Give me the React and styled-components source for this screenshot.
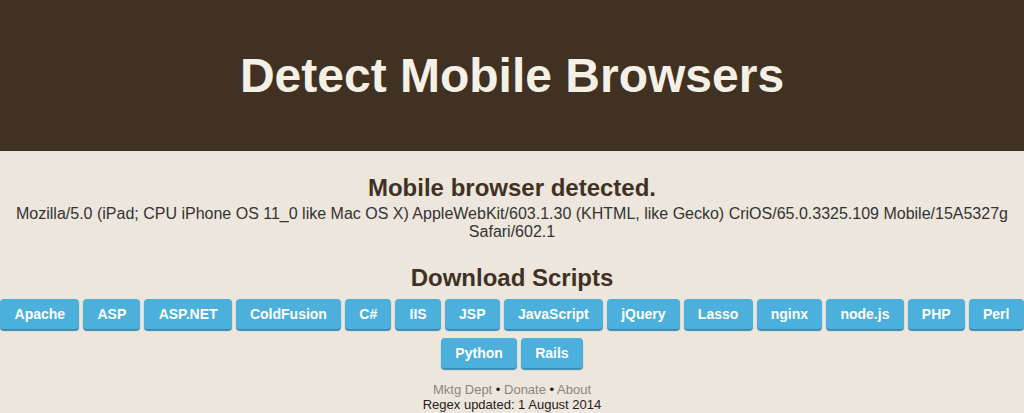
import React from "react";
import styled, { createGlobalStyle } from "styled-components";

const scripts = [
  "Apache", "ASP", "ASP.NET", "ColdFusion", "C#", "IIS", "JSP", "JavaScript",
  "jQuery", "Lasso", "nginx", "node.js", "PHP", "Perl", "Python", "Rails",
];

const GlobalStyle = createGlobalStyle`
  html, body {
    margin: 0;
    padding: 0;
    background: #ede6dc;
    font-family: "Liberation Sans", Arial, sans-serif;
  }
`;

const Header = styled.header`
  height: 151px;
  background: #413123;
  display: flex;
  align-items: center;
  justify-content: center;
`;

const Title = styled.h1`
  margin: 0;
  font-size: 48px;
  font-weight: 700;
  color: #f5f0e6;
`;

const Main = styled.main`
  text-align: center;
  padding-top: 23px;
`;

const Heading = styled.h2`
  margin: ${(p) => p.$top || 0}px 0 0;
  font-size: 24px;
  line-height: 28px;
  font-weight: 700;
  color: #413123;
`;

const Agent = styled.p`
  margin: 3px 0 0;
  font-size: 16px;
  line-height: 18px;
  color: #333;
`;

const ButtonRow = styled.div`
  display: flex;
  flex-wrap: wrap;
  justify-content: center;
  column-gap: 4px;
  row-gap: 9px;
  margin-top: 7px;
`;

const ScriptButton = styled.a`
  display: block;
  height: 30px;
  line-height: 30px;
  padding: 0 14.2px;
  border-radius: 4px;
  background: #4bb0dc;
  box-shadow: 0 2px 1px #3a8ab0;
  color: #fff;
  font-size: 14px;
  font-weight: 700;
  text-decoration: none;
  cursor: pointer;
`;

const Footer = styled.footer`
  margin-top: 14px;
  font-size: 13px;
  line-height: 15px;
  color: #222;
`;

const FooterLink = styled.a`
  color: #8a8580;
  text-decoration: none;
`;

export default function App() {
  return (
    <>
      <GlobalStyle />
      <Header>
        <Title>Detect Mobile Browsers</Title>
      </Header>
      <Main>
        <Heading>Mobile browser detected.</Heading>
        <Agent>
          Mozilla/5.0 (iPad; CPU iPhone OS 11_0 like Mac OS X) AppleWebKit/603.1.30 (KHTML, like Gecko)
          CriOS/65.0.3325.109 Mobile/15A5327g Safari/602.1
        </Agent>
        <Heading $top={23}>Download Scripts</Heading>
        <ButtonRow>
          {scripts.map((s) => (
            <ScriptButton key={s}>{s}</ScriptButton>
          ))}
        </ButtonRow>
        <Footer>
          <div>
            <FooterLink>Mktg Dept</FooterLink> • <FooterLink>Donate</FooterLink> •{" "}
            <FooterLink>About</FooterLink>
          </div>
          <div>Regex updated: 1 August 2014</div>
        </Footer>
      </Main>
    </>
  );
}
